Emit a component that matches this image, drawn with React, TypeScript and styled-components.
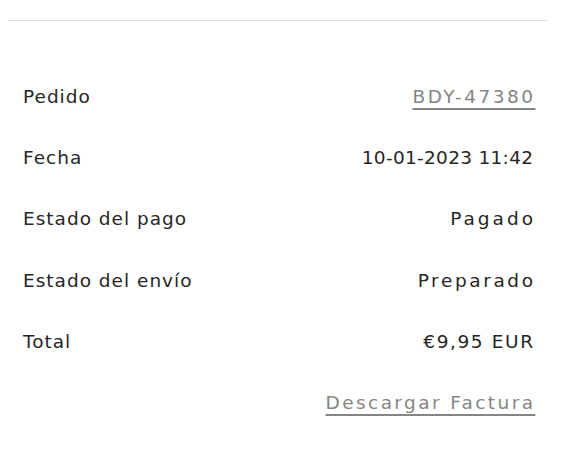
import React from "react";
import styled, { createGlobalStyle } from "styled-components";

const Global = createGlobalStyle`
  html, body { margin: 0; padding: 0; background: #ffffff; }
  body { font-family: "DejaVu Sans", Inter, "Liberation Sans", sans-serif; }
`;

const Page = styled.div`
  width: 540px;
  padding: 20px 0 0 8px;
`;

const Divider = styled.hr`
  margin: 0;
  border: 0;
  border-top: 1px solid #dddddd;
`;

const List = styled.dl`
  margin: 0;
  padding: 45px 15px 0 15px;
  display: flex;
  flex-direction: column;
`;

const Row = styled.div`
  display: flex;
  justify-content: space-between;
  align-items: center;
  height: 61.2px;
`;

const Label = styled.dt`
  margin: 0;
  font-size: 18.5px;
  font-weight: 400;
  color: #262626;
  letter-spacing: 1px;
`;

const Value = styled.dd<{ $link?: boolean; $tracking: number }>`
  margin: 0 ${(p) => -p.$tracking}px 0 auto;
  font-size: 18.5px;
  font-weight: 400;
  letter-spacing: ${(p) => p.$tracking}px;
  color: ${(p) => (p.$link ? "#858585" : "#262626")};
  text-decoration: ${(p) => (p.$link ? "underline" : "none")};
  text-decoration-thickness: 2px;
  text-underline-offset: 5px;
`;

const rows: { label: string; value: string; link?: boolean; tracking: number }[] = [
  { label: "Pedido", value: "BDY-47380", link: true, tracking: 2.5 },
  { label: "Fecha", value: "10-01-2023 11:42", tracking: 0.3 },
  { label: "Estado del pago", value: "Pagado", tracking: 3 },
  { label: "Estado del envío", value: "Preparado", tracking: 2.6 },
  { label: "Total", value: "€9,95 EUR", tracking: 1.6 },
  { label: "", value: "Descargar Factura", link: true, tracking: 2.4 },
];

export default function App() {
  return (
    <>
      <Global />
      <Page>
        <Divider />
        <List>
          {rows.map((r, i) => (
            <Row key={i}>
              <Label>{r.label}</Label>
              <Value $link={r.link} $tracking={r.tracking}>
                {r.value}
              </Value>
            </Row>
          ))}
        </List>
      </Page>
    </>
  );
}
